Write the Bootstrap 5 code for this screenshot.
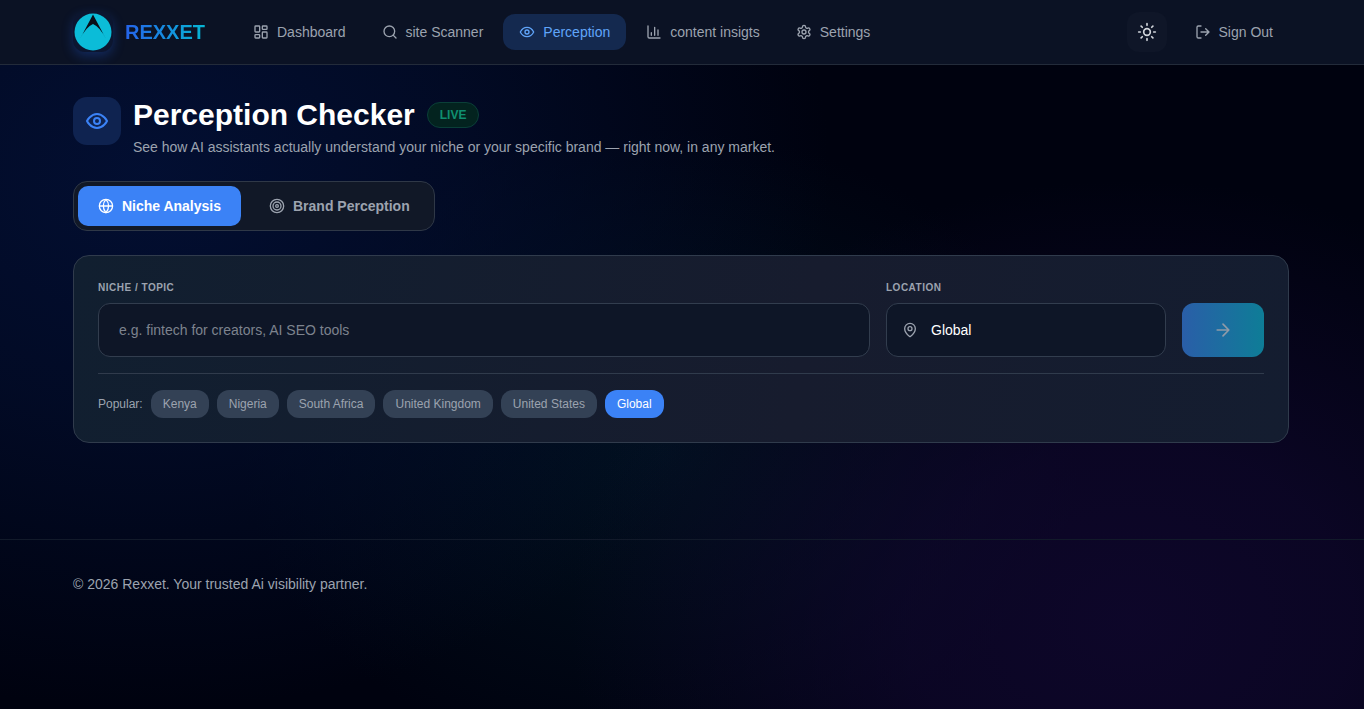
<!DOCTYPE html>
<html lang="en">
<head>
    <meta charset="UTF-8">
    <meta name="viewport" content="width=device-width, initial-scale=1.0">
    <title>Rexxet - Perception Checker</title>
    <link href="https://cdn.jsdelivr.net/npm/bootstrap@5.3.0/dist/css/bootstrap.min.css" rel="stylesheet">
    <style>
        html, body { height: 100%; }
        body {
            font-family: "Liberation Sans", Arial, sans-serif;
            color: #fff;
            overflow: hidden;
            background:
                radial-gradient(ellipse 560px 440px at 1130px 620px, rgba(18, 8, 50, .75) 0%, rgba(18, 8, 50, .6) 40%, transparent 100%),
                radial-gradient(ellipse 680px 540px at 150px 170px, rgba(3, 17, 56, .85) 0%, rgba(3, 16, 52, .6) 45%, transparent 100%),
                radial-gradient(ellipse 420px 320px at 660px 450px, rgba(2, 26, 40, .6), transparent),
                #00020f;
        }
        .wrap { width: 1216px; margin-left: 73px; }
        .topbar { height: 65px; background: #0b1224; border-bottom: 1px solid #232b3a; }
        .topbar .wrap { height: 64px; }
        .logo-box { width: 40px; height: 40px; background: #0c1630; box-shadow: 0 4px 12px rgba(37, 99, 235, .3); border-radius: 12px; }
        .brand {
            width: 80px; margin-left: 12px; margin-right: 32px; font-size: 20px; font-weight: 700;
            background: linear-gradient(90deg, #2563eb, #06b6d4);
            -webkit-background-clip: text; background-clip: text; color: transparent;
        }
        .nav-pill {
            height: 36px; padding: 0 16px; border-radius: 12px; color: #9ca3af; font-size: 14px;
            display: flex; align-items: center; gap: 8px; text-decoration: none;
        }
        .nav-pill.active { background: #14294f; color: #60a5fa; }
        .theme-btn { width: 40px; height: 40px; border-radius: 12px; background: #0f1628; color: #d1d5db; margin-right: 12px; }
        .head-icon { width: 48px; height: 48px; border-radius: 14px; background: #0f2350; color: #3b82f6; }
        h1.title { font-size: 30px; line-height: 36px; font-weight: 700; margin: 0; }
        .live {
            font-size: 12px; font-weight: 700; color: #0f8f70; background: #03231f; border: 1px solid #0a3f38;
            border-radius: 999px; padding: 0 12px; height: 26px; line-height: 24px;
        }
        .sub { font-size: 14px; color: #9ca3af; line-height: 20px; margin-top: 4px; }
        .tabs { width: 362px; height: 50px; padding: 4px; border-radius: 14px; background: #111827; border: 1px solid #2f3847; margin-top: 24px; }
        .tab-btn {
            height: 40px; padding: 0 20px; border-radius: 10px; font-size: 14px; font-weight: 700; white-space: nowrap;
            border: 0; background: transparent; color: #9ca3af; display: flex; align-items: center; gap: 8px;
        }
        .tab-btn.active { background: #3b82f6; color: #fff; width: 163px; }
        .search-card {
            height: 188px; margin-top: 24px; padding: 24px; border-radius: 16px;
            background: linear-gradient(100deg, #111f30, #171c2e 60%, #141d30);
            border: 1px solid #303b4c;
        }
        .lbl { font-size: 10px; font-weight: 700; letter-spacing: .5px; line-height: 15px; color: #9ca3af; margin-bottom: 8px; display: block; }
        .field {
            height: 54px; border-radius: 12px; background: #0e1627; border: 1px solid #323d4e;
            font-size: 14px; color: #fff; display: flex; align-items: center;
        }
        .field.niche { width: 772px; padding: 0 20px; color: #7d838e; }
        .field.loc { width: 280px; padding: 0 15px; gap: 13px; }
        .go-btn {
            width: 82px; height: 54px; border: 0; border-radius: 12px; color: #8f9aa8;
            background: linear-gradient(90deg, #2a5ea8, #0e7d97);
        }
        .divline { border-top: 1px solid #303b4c; margin-top: 16px; padding-top: 16px; }
        .pop { font-size: 12px; color: #9ca3af; }
        .chip { height: 28px; padding: 0 12px; border: 0; border-radius: 12px; background: #334155; color: #9ca3af; font-size: 12px; }
        .chip.active { background: #3b82f6; color: #fff; }
        .bottom { position: absolute; top: 539px; left: 0; right: 0; border-top: 1px solid #121a2a; padding-top: 34px; font-size: 14px; line-height: 20px; color: #9ca3af; }
        .head-row { column-gap: 12px; }
        main.wrap { padding-top: 32px; }
    </style>
</head>
<body>
    <nav class="topbar">
        <div class="wrap d-flex align-items-center">
            <div class="logo-box flex-shrink-0">
                <svg width="40" height="40" viewBox="0 0 40 40">
                    <circle cx="20" cy="20" r="18.5" fill="#0bbcd8"/>
                    <path d="M20 2.5 L33 27 Q27 15 20 12 Q13 15 7 27 Z" fill="#0a0e18"/>
                </svg>
            </div>
            <div class="brand">REXXET</div>
            <div class="d-flex align-items-center gap-1">
                <a class="nav-pill" href="#">
                    <svg width="16" height="16" viewBox="0 0 24 24" fill="none" stroke="currentColor" stroke-width="2"><rect x="3" y="3" width="7" height="9" rx="1"/><rect x="14" y="3" width="7" height="5" rx="1"/><rect x="14" y="12" width="7" height="9" rx="1"/><rect x="3" y="16" width="7" height="5" rx="1"/></svg>
                    Dashboard</a>
                <a class="nav-pill" href="#">
                    <svg width="16" height="16" viewBox="0 0 24 24" fill="none" stroke="currentColor" stroke-width="2" stroke-linecap="round"><circle cx="11" cy="11" r="8"/><path d="m21 21-4.3-4.3"/></svg>
                    site Scanner</a>
                <a class="nav-pill active" href="#">
                    <svg width="16" height="16" viewBox="0 0 24 24" fill="none" stroke="currentColor" stroke-width="2"><path d="M2 12s3.5-7 10-7 10 7 10 7-3.5 7-10 7-10-7-10-7Z"/><circle cx="12" cy="12" r="3"/></svg>
                    Perception</a>
                <a class="nav-pill" href="#">
                    <svg width="16" height="16" viewBox="0 0 24 24" fill="none" stroke="currentColor" stroke-width="2" stroke-linecap="round"><path d="M3 3v16a2 2 0 0 0 2 2h16"/><path d="M8 17v-4M13 17V5M18 17V9"/></svg>
                    content insigts</a>
                <a class="nav-pill" href="#">
                    <svg width="16" height="16" viewBox="0 0 24 24" fill="none" stroke="currentColor" stroke-width="2" stroke-linejoin="round"><path d="M12.2 2h-.4a2 2 0 0 0-2 2v.2a2 2 0 0 1-1 1.7l-.4.3a2 2 0 0 1-2 0l-.2-.1a2 2 0 0 0-2.7.7l-.2.4a2 2 0 0 0 .7 2.7l.2.1a2 2 0 0 1 1 1.7v.5a2 2 0 0 1-1 1.8l-.2.1a2 2 0 0 0-.7 2.7l.2.4a2 2 0 0 0 2.7.7l.2-.1a2 2 0 0 1 2 0l.4.3a2 2 0 0 1 1 1.7v.2a2 2 0 0 0 2 2h.4a2 2 0 0 0 2-2v-.2a2 2 0 0 1 1-1.7l.4-.3a2 2 0 0 1 2 0l.2.1a2 2 0 0 0 2.7-.7l.2-.4a2 2 0 0 0-.7-2.7l-.2-.1a2 2 0 0 1-1-1.8v-.5a2 2 0 0 1 1-1.7l.2-.1a2 2 0 0 0 .7-2.7l-.2-.4a2 2 0 0 0-2.7-.7l-.2.1a2 2 0 0 1-2 0l-.4-.3a2 2 0 0 1-1-1.7V4a2 2 0 0 0-2-2Z"/><circle cx="12" cy="12" r="3"/></svg>
                    Settings</a>
            </div>
            <div class="ms-auto d-flex align-items-center">
                <div class="theme-btn d-flex align-items-center justify-content-center">
                    <svg width="20" height="20" viewBox="0 0 24 24" fill="none" stroke="currentColor" stroke-width="2" stroke-linecap="round"><circle cx="12" cy="12" r="4"/><path d="M12 2v2M12 20v2M4.93 4.93l1.41 1.41M17.66 17.66l1.41 1.41M2 12h2M20 12h2M6.34 17.66l-1.41 1.41M19.07 4.93l-1.41 1.41"/></svg>
                </div>
                <a class="nav-pill" href="#">
                    <svg width="16" height="16" viewBox="0 0 24 24" fill="none" stroke="currentColor" stroke-width="2" stroke-linecap="round" stroke-linejoin="round"><path d="M9 21H5a2 2 0 0 1-2-2V5a2 2 0 0 1 2-2h4"/><path d="m16 17 5-5-5-5M21 12H9"/></svg>
                    Sign Out</a>
            </div>
        </div>
    </nav>

    <main class="wrap">
        <div class="d-flex head-row">
            <div class="head-icon d-flex align-items-center justify-content-center flex-shrink-0">
                <svg width="24" height="24" viewBox="0 0 24 24" fill="none" stroke="currentColor" stroke-width="2"><path d="M2 12s3.5-7 10-7 10 7 10 7-3.5 7-10 7-10-7-10-7Z"/><circle cx="12" cy="12" r="3"/></svg>
            </div>
            <div>
                <div class="d-flex align-items-center head-row">
                    <h1 class="title">Perception Checker</h1>
                    <span class="live">LIVE</span>
                </div>
                <div class="sub">See how AI assistants actually understand your niche or your specific brand — right now, in any market.</div>
            </div>
        </div>

        <div class="tabs d-flex gap-2">
            <button class="tab-btn active">
                <svg width="16" height="16" viewBox="0 0 24 24" fill="none" stroke="currentColor" stroke-width="2"><circle cx="12" cy="12" r="10"/><path d="M12 2a14.5 14.5 0 0 0 0 20 14.5 14.5 0 0 0 0-20M2 12h20"/></svg>
                Niche Analysis</button>
            <button class="tab-btn">
                <svg width="16" height="16" viewBox="0 0 24 24" fill="none" stroke="currentColor" stroke-width="2"><circle cx="12" cy="12" r="10"/><circle cx="12" cy="12" r="6"/><circle cx="12" cy="12" r="2"/></svg>
                Brand Perception</button>
        </div>

        <div class="search-card">
            <div class="d-flex gap-3">
                <div>
                    <label class="lbl">NICHE / TOPIC</label>
                    <div class="field niche">e.g. fintech for creators, AI SEO tools</div>
                </div>
                <div>
                    <label class="lbl">LOCATION</label>
                    <div class="field loc">
                        <svg width="16" height="16" viewBox="0 0 24 24" fill="none" stroke="#9ca3af" stroke-width="2"><path d="M20 10c0 5-5.5 10.2-7.4 11.8a1 1 0 0 1-1.2 0C9.5 20.2 4 15 4 10a8 8 0 0 1 16 0"/><circle cx="12" cy="10" r="3"/></svg>
                        Global
                    </div>
                </div>
                <div class="d-flex align-items-end">
                    <button class="go-btn d-flex align-items-center justify-content-center">
                        <svg width="20" height="20" viewBox="0 0 24 24" fill="none" stroke="currentColor" stroke-width="2" stroke-linecap="round" stroke-linejoin="round"><path d="M5 12h14M12 5l7 7-7 7"/></svg>
                    </button>
                </div>
            </div>
            <div class="divline d-flex align-items-center gap-2">
                <span class="pop">Popular:</span>
                <button class="chip">Kenya</button>
                <button class="chip">Nigeria</button>
                <button class="chip">South Africa</button>
                <button class="chip">United Kingdom</button>
                <button class="chip">United States</button>
                <button class="chip active">Global</button>
            </div>
        </div>
    </main>

    <footer class="bottom">
        <div class="wrap">© 2026 Rexxet. Your trusted Ai visibility partner.</div>
    </footer>
</body>
</html>
